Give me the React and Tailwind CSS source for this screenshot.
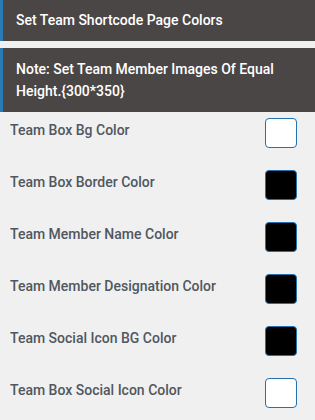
import React from "react";

const rows = [
  { label: "Team Box Bg Color", color: "#ffffff" },
  { label: "Team Box Border Color", color: "#000000" },
  { label: "Team Member Name Color", color: "#000000" },
  { label: "Team Member Designation Color", color: "#000000" },
  { label: "Team Social Icon BG Color", color: "#000000" },
  { label: "Team Box Social Icon Color", color: "#ffffff" },
];

const App = () => {
  return (
    <div
      className="min-h-[420px] w-[315px] bg-[#f0f0f1]"
      style={{ fontFamily: "Roboto, 'Liberation Sans', sans-serif" }}
    >
      <div className="flex h-[41px] items-center border-l-[3px] border-[#2a7ab5] bg-[#4b4646] pl-[13px] text-[14px] font-medium text-white">
        Set Team Shortcode Page Colors
      </div>
      <div className="mt-[7px] flex h-[64px] items-center border-l-[3px] border-[#2a7ab5] bg-[#4b4646] pl-[13px] pr-4 text-[14px] font-medium leading-[22px] text-white">
        Note: Set Team Member Images Of Equal Height.{"{300*350}"}
      </div>
      <div>
        {rows.map((row) => (
          <div
            key={row.label}
            className="flex h-[52px] items-start justify-between pl-[10px] pr-[18px]"
          >
            <span className="mt-[8px] text-[14px] leading-[20px] font-medium text-[#50575e]">
              {row.label}
            </span>
            <div
              className="mt-[6px] h-[30px] w-[32px] rounded-[4px] border border-[#2271b1]"
              style={{ backgroundColor: row.color }}
            />
          </div>
        ))}
      </div>
    </div>
  );
};

export default App;
